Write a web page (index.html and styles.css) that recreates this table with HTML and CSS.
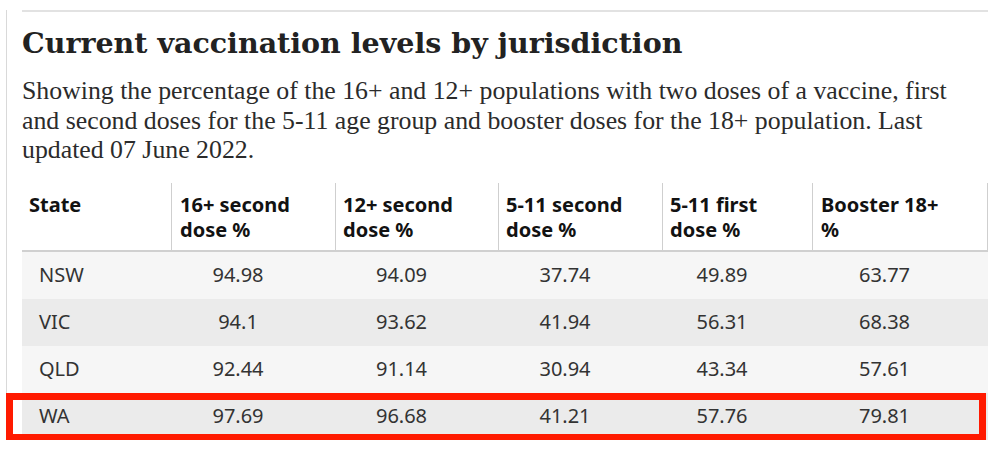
FILE: index.html
```html
<!DOCTYPE html>
<html lang="en">
<head>
<meta charset="utf-8">
<title>Current vaccination levels by jurisdiction</title>
<link rel="stylesheet" href="styles.css">
</head>
<body>
<div class="frame">
  <div class="panel">
    <h1 class="title">Current vaccination levels by jurisdiction</h1>
    <p class="standfirst">Showing the percentage of the 16+ and 12+ populations with two doses of a vaccine, first and second doses for the 5-11 age group and booster doses for the 18+ population. Last updated 07 June 2022.</p>
    <div class="table-wrap">
      <table class="data">
        <thead>
          <tr>
            <th class="c1">State</th>
            <th class="c2">16+ second dose %</th>
            <th class="c3">12+ second dose %</th>
            <th class="c4">5-11 second dose %</th>
            <th class="c5">5-11 first dose %</th>
            <th class="c6">Booster 18+ %</th>
          </tr>
        </thead>
        <tbody>
          <tr class="odd"><td class="state">NSW</td><td>94.98</td><td>94.09</td><td>37.74</td><td>49.89</td><td>63.77</td></tr>
          <tr class="even"><td class="state">VIC</td><td>94.1</td><td>93.62</td><td>41.94</td><td>56.31</td><td>68.38</td></tr>
          <tr class="odd"><td class="state">QLD</td><td>92.44</td><td>91.14</td><td>30.94</td><td>43.34</td><td>57.61</td></tr>
          <tr class="even"><td class="state">WA</td><td>97.69</td><td>96.68</td><td>41.21</td><td>57.76</td><td>79.81</td></tr>
        </tbody>
      </table>
      <div class="highlight"></div>
    </div>
  </div>
</div>
</body>
</html>
```

FILE: styles.css
```css
html, body {
  margin: 0;
  padding: 0;
  background: #ffffff;
}

.frame {
  margin: 10px 0 0 6px;
  border-left: 1px solid #d9d9d9;
  padding-left: 15px;
  width: 966px;
}

.panel {
  border-top: 2px solid #e2e2e2;
  width: 966px;
}

.title {
  margin: 13px 0 0;
  font-family: "DejaVu Serif", serif;
  font-weight: 700;
  font-size: 28.5px;
  line-height: 36px;
  color: #222222;
}

.standfirst {
  margin: 15px 0 0;
  max-width: 955px;
  font-family: "Liberation Serif", serif;
  font-size: 25.8px;
  line-height: 29.5px;
  color: #2b2b2b;
}

.table-wrap {
  position: relative;
  margin-top: 18px;
}

.data {
  width: 966px;
  table-layout: fixed;
  border-collapse: separate;
  border-spacing: 0;
  font-family: "Noto Sans", sans-serif;
}

.data th {
  box-sizing: border-box;
  text-align: left;
  vertical-align: top;
  padding: 9px 30px 8px 7px;
  font-size: 20px;
  line-height: 25px;
  font-weight: 700;
  color: #121212;
  border-right: 1px solid #cfcfcf;
  border-bottom: 2px solid #d0d0d0;
}

.data th.c1 { width: 150px; }
.data th.c2 { width: 164px; padding-left: 8px; }
.data th.c3 { width: 163px; }
.data th.c4 { width: 164px; }
.data th.c5 { width: 150px; }
.data th.c6 { width: 175px; padding-left: 8px; }

.data td {
  height: 47px;
  padding: 0 32px 0 0;
  text-align: center;
  vertical-align: middle;
  font-size: 20px;
  line-height: 24px;
  color: #333333;
}

.data td.state {
  text-align: left;
  padding: 0 0 0 17px;
}

.data tr.odd td { background: #f6f6f6; }
.data tr.even td { background: #ebebeb; }

.highlight {
  position: absolute;
  left: -16px;
  right: 2px;
  bottom: -1px;
  height: 48px;
  box-sizing: border-box;
  border: 7px solid #ff1a00;
  pointer-events: none;
}
```
